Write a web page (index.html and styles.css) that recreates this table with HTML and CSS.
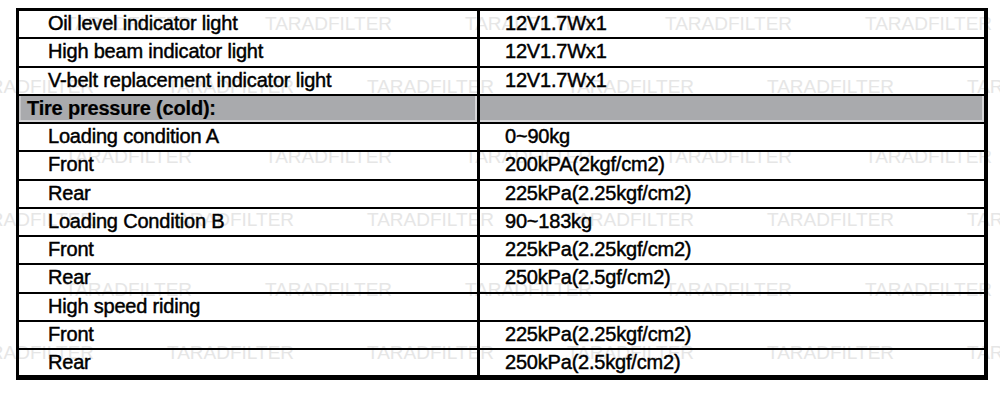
FILE: index.html
```html
<!DOCTYPE html>
<html>
<head>
<meta charset="utf-8">
<link rel="stylesheet" href="styles.css">
</head>
<body>
<div class="wm-layer" aria-hidden="true">
  <div class="wm-line wm-a"><span>TARADFILTER</span><span>TARADFILTER</span><span>TARADFILTER</span><span>TARADFILTER</span><span>TARADFILTER</span></div>
  <div class="wm-line wm-b"><span>TARADFILTER</span><span>TARADFILTER</span><span>TARADFILTER</span><span>TARADFILTER</span><span>TARADFILTER</span><span>TARADFILTER</span></div>
  <div class="wm-line wm-a"><span>TARADFILTER</span><span>TARADFILTER</span><span>TARADFILTER</span><span>TARADFILTER</span><span>TARADFILTER</span></div>
  <div class="wm-line wm-b"><span>TARADFILTER</span><span>TARADFILTER</span><span>TARADFILTER</span><span>TARADFILTER</span><span>TARADFILTER</span><span>TARADFILTER</span></div>
  <div class="wm-line wm-a"><span>TARADFILTER</span><span>TARADFILTER</span><span>TARADFILTER</span><span>TARADFILTER</span><span>TARADFILTER</span></div>
  <div class="wm-line wm-b"><span>TARADFILTER</span><span>TARADFILTER</span><span>TARADFILTER</span><span>TARADFILTER</span><span>TARADFILTER</span><span>TARADFILTER</span></div>
</div>
<div class="sheet">
  <div class="row"><div class="cell lab">Oil level indicator light</div><div class="cell val">12V1.7Wx1</div></div>
  <div class="row"><div class="cell lab">High beam indicator light</div><div class="cell val">12V1.7Wx1</div></div>
  <div class="row"><div class="cell lab">V-belt replacement indicator light</div><div class="cell val">12V1.7Wx1</div></div>
  <div class="row head"><div class="cell lab">Tire pressure (cold):</div><div class="cell val"></div></div>
  <div class="row"><div class="cell lab">Loading condition A</div><div class="cell val">0~90kg</div></div>
  <div class="row"><div class="cell lab">Front</div><div class="cell val">200kPA(2kgf/cm2)</div></div>
  <div class="row"><div class="cell lab">Rear</div><div class="cell val">225kPa(2.25kgf/cm2)</div></div>
  <div class="row"><div class="cell lab">Loading Condition B</div><div class="cell val">90~183kg</div></div>
  <div class="row"><div class="cell lab">Front</div><div class="cell val">225kPa(2.25kgf/cm2)</div></div>
  <div class="row"><div class="cell lab">Rear</div><div class="cell val">250kPa(2.5gf/cm2)</div></div>
  <div class="row"><div class="cell lab">High speed riding</div><div class="cell val"></div></div>
  <div class="row"><div class="cell lab">Front</div><div class="cell val">225kPa(2.25kgf/cm2)</div></div>
  <div class="row"><div class="cell lab">Rear</div><div class="cell val">250kPa(2.5kgf/cm2)</div></div>
</div>
</body>
</html>
```
FILE: styles.css
```css
html, body {
  margin: 0;
  padding: 0;
  background: #ffffff;
}
body {
  position: relative;
  width: 1000px;
  height: 406px;
  overflow: hidden;
}
.wm-layer {
  position: absolute;
  left: 0;
  top: 0;
  width: 1000px;
  height: 406px;
  overflow: hidden;
  padding-top: 13.5px;
  box-sizing: border-box;
  z-index: 0;
}
.wm-line {
  display: flex;
  height: 19px;
  font: 19px/19px "Liberation Sans", Arial, sans-serif;
  color: #e6e6e6;
  white-space: nowrap;
}
.wm-line span {
  flex: 0 0 200px;
}
.wm-a {
  margin-left: 65px;
}
.wm-b {
  margin-left: -33px;
  margin-top: 44px;
}
.wm-b + .wm-a {
  margin-top: 51px;
}
.sheet {
  position: relative;
  z-index: 1;
  margin: 8px 0 0 16px;
  width: 972px;
  box-sizing: border-box;
  border: 3px solid #000;
  border-right-width: 4px;
  border-bottom-width: 5px;
}
.row {
  display: grid;
  grid-template-columns: 461px 504px;
  height: 28.25px;
  box-sizing: border-box;
  border-bottom: 2px solid #000;
}
.row:last-child {
  height: 25px;
  border-bottom: 0;
}
.cell {
  font: 20px/22px "Liberation Sans", Arial, sans-serif;
  letter-spacing: -0.2px;
  color: #000;
  padding-top: 1px;
  white-space: nowrap;
  box-sizing: border-box;
  -webkit-text-stroke: 0.45px #000;
}
.lab {
  padding-left: 29px;
  border-right: 3px solid #000;
}
.val {
  padding-left: 25px;
}
.head .cell {
  background: #a9aaad;
  box-shadow: inset -2px -2px 0 #d6d6d8;
}
.head .lab {
  padding-left: 8px;
  font-weight: bold;
  -webkit-text-stroke: 0.2px #000;
  box-shadow: inset -2px -2px 0 #d6d6d8, inset 2px 0 0 #c4c4c6;
}
```
